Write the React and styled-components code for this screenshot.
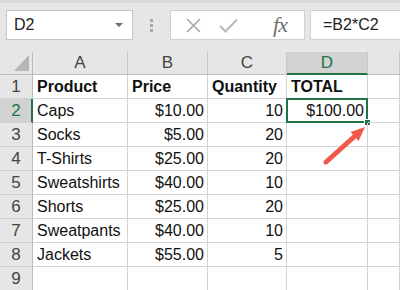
import React from "react";
import styled, { createGlobalStyle } from "styled-components";

const GlobalStyle = createGlobalStyle`
    body {
        margin: 0;
        overflow: hidden;
        background: #ffffff;
        font-family: "Liberation Sans", Arial, sans-serif;
    }
`;

const Window = styled.div`
    position: relative;
    width: 400px;
    height: 290px;
    overflow: hidden;
    background: #ffffff;
`;

const FormulaBar = styled.div`
    display: flex;
    align-items: flex-start;
    height: 52px;
    box-sizing: border-box;
    padding: 7px 0 0 6px;
    background: #e6e6e6;
    border-top: 3px solid #d9d9d9;
`;

const NameBox = styled.div`
    display: flex;
    align-items: center;
    justify-content: space-between;
    width: 127px;
    height: 30px;
    box-sizing: border-box;
    padding: 0 9px 0 7px;
    background: #ffffff;
    border: 1px solid #c6c6c6;
    font-size: 16px;
    color: #222;
`;

const DropArrow = styled.span`
    width: 0;
    height: 0;
    border-left: 4px solid transparent;
    border-right: 4px solid transparent;
    border-top: 4px solid #6d6d6d;
`;

const Grip = styled.div`
    display: flex;
    flex-direction: column;
    align-items: center;
    justify-content: center;
    gap: 2px;
    width: 37px;
    height: 30px;
    span {
        width: 3px;
        height: 3px;
        background: #a8a8a8;
    }
`;

const ButtonBox = styled.div`
    display: flex;
    align-items: center;
    width: 135px;
    height: 30px;
    box-sizing: border-box;
    background: #ffffff;
    border: 1px solid #d0d0d0;
    padding-left: 14px;
`;

const IconSlot = styled.span`
    display: flex;
    align-items: center;
    justify-content: center;
    width: ${(p) => p.$w}px;
    margin-left: ${(p) => p.$gap || 0}px;
`;

const Fx = styled.span`
    font-family: "Liberation Serif", "Times New Roman", serif;
    font-style: italic;
    font-size: 22px;
    color: #6f6f6f;
    letter-spacing: -1px;
    line-height: 1;
`;

const FormulaInput = styled.div`
    flex: 1;
    height: 30px;
    box-sizing: border-box;
    margin-left: 5px;
    padding-left: 12px;
    display: flex;
    align-items: center;
    background: #ffffff;
    border: 1px solid #d0d0d0;
    border-right: none;
    font-size: 16px;
    color: #222;
`;

const Sheet = styled.div`
    display: grid;
    grid-template-columns: 33px 95px 80px 79px 81px 1fr;
    grid-template-rows: 23px repeat(9, 24px);
`;

const Corner = styled.div`
    position: relative;
    box-sizing: border-box;
    background: #e6e6e6;
    border-right: 1px solid #bcbcbc;
    border-bottom: 1px solid #bcbcbc;
    &::after {
        content: "";
        position: absolute;
        right: 3px;
        bottom: 3px;
        width: 0;
        height: 0;
        border-left: 15px solid transparent;
        border-bottom: 16px solid #b6b6b6;
    }
`;

const ColHead = styled.div`
    display: flex;
    align-items: center;
    justify-content: center;
    box-sizing: border-box;
    background: ${(p) => (p.$active ? "#d2d2d2" : "#e6e6e6")};
    border-right: 1px solid #c8c8c8;
    border-bottom: ${(p) => (p.$active ? "2px solid #217346" : "1px solid #bcbcbc")};
    padding-top: ${(p) => (p.$active ? "1px" : "0")};
    font-size: 17px;
    color: ${(p) => (p.$active ? "#217346" : "#444")};
`;

const RowHead = styled.div`
    display: flex;
    align-items: center;
    justify-content: center;
    box-sizing: border-box;
    background: ${(p) => (p.$active ? "#d2d2d2" : "#e6e6e6")};
    border-right: ${(p) => (p.$active ? "2px solid #217346" : "1px solid #bcbcbc")};
    border-bottom: 1px solid #d0d0d0;
    padding-left: ${(p) => (p.$active ? "1px" : "0")};
    font-size: 17px;
    color: ${(p) => (p.$active ? "#217346" : "#444")};
`;

const Cell = styled.div`
    position: relative;
    display: flex;
    align-items: center;
    justify-content: ${(p) => (p.$num ? "flex-end" : "flex-start")};
    box-sizing: border-box;
    padding: 0 3px 0 4px;
    border-right: 1px solid #d4d4d4;
    border-bottom: 1px solid #d4d4d4;
    font-size: 16px;
    font-weight: ${(p) => (p.$bold ? "bold" : "normal")};
    color: #111;
    white-space: nowrap;
`;

const ActiveFrame = styled.span`
    position: absolute;
    left: -1px;
    top: -1px;
    right: -1px;
    bottom: -1px;
    border: 2px solid #217346;
    pointer-events: none;
`;

const FillHandle = styled.span`
    position: absolute;
    right: -4px;
    bottom: -4px;
    width: 5px;
    height: 5px;
    background: #217346;
    border: 1px solid #ffffff;
`;

const Arrow = styled.svg`
    position: absolute;
    left: 0;
    top: 0;
    pointer-events: none;
`;

const rows = [
    ["Product", "Price", "Quantity", "TOTAL"],
    ["Caps", "$10.00", "10", "$100.00"],
    ["Socks", "$5.00", "20", ""],
    ["T-Shirts", "$25.00", "20", ""],
    ["Sweatshirts", "$40.00", "10", ""],
    ["Shorts", "$25.00", "20", ""],
    ["Sweatpants", "$40.00", "10", ""],
    ["Jackets", "$55.00", "5", ""],
    ["", "", "", ""],
];

const App = () => (
    <Window>
        <GlobalStyle />
        <FormulaBar>
            <NameBox>
                D2
                <DropArrow />
            </NameBox>
            <Grip>
                <span />
                <span />
                <span />
            </Grip>
            <ButtonBox>
                <IconSlot $w={16}>
                    <svg width="15" height="15" viewBox="0 0 15 15">
                        <path d="M1 1 L14 14 M14 1 L1 14" stroke="#a9a9a9" strokeWidth="1.6" />
                    </svg>
                </IconSlot>
                <IconSlot $w={30} $gap={12}>
                    <svg width="19" height="15" viewBox="0 0 19 15">
                        <path d="M1 8 L6.5 13.5 L18 1.5" stroke="#b8b8b8" strokeWidth="2" fill="none" />
                    </svg>
                </IconSlot>
                <IconSlot $w={30} $gap={22}>
                    <Fx>fx</Fx>
                </IconSlot>
            </ButtonBox>
            <FormulaInput>=B2*C2</FormulaInput>
        </FormulaBar>
        <Sheet>
            <Corner />
            {["A", "B", "C", "D", "E"].map((c) => (
                <ColHead key={c} $active={c === "D"}>{c === "E" ? "" : c}</ColHead>
            ))}
            {rows.map((r, i) => (
                <React.Fragment key={i}>
                    <RowHead $active={i === 1}>{i + 1}</RowHead>
                    <Cell $bold={i === 0}>{r[0]}</Cell>
                    <Cell $bold={i === 0} $num={i > 0}>{r[1]}</Cell>
                    <Cell $bold={i === 0} $num={i > 0}>{r[2]}</Cell>
                    <Cell $bold={i === 0} $num={i > 0}>
                        {r[3]}
                        {i === 1 && (
                            <>
                                <ActiveFrame />
                                <FillHandle />
                            </>
                        )}
                    </Cell>
                    <Cell />
                </React.Fragment>
            ))}
        </Sheet>
        <Arrow width="400" height="290" viewBox="0 0 400 290">
            <line x1="326" y1="162" x2="355" y2="136" stroke="#f0594b" strokeWidth="5" strokeLinecap="round" />
            <polygon points="365,127 358.6,141 350.6,131.9" fill="#f0594b" />
        </Arrow>
    </Window>
);

export default App;
